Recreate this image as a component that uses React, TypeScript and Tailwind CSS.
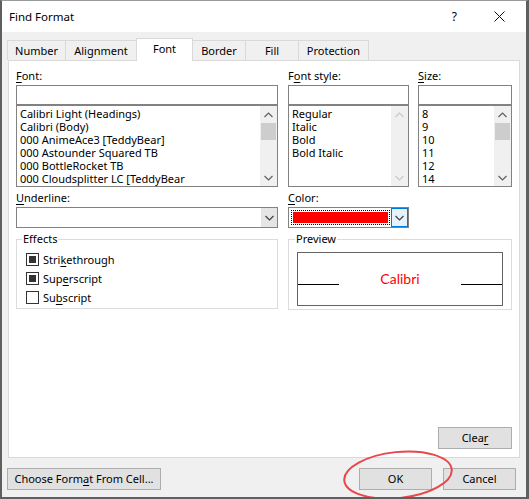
import React from "react";

const Chevron = ({ up = false, color = "#404040" }: { up?: boolean; color?: string }) => (
  <svg width="9" height="6" viewBox="0 0 9 6">
    <polyline
      points={up ? "0.5,5 4.5,1 8.5,5" : "0.5,1 4.5,5 8.5,1"}
      fill="none"
      stroke={color}
      strokeWidth="1.2"
    />
  </svg>
);

const ScrollBar = ({ disabled = false }: { disabled?: boolean }) => (
  <div className="w-[17px] h-full bg-[#f0f0f0] flex flex-col items-center shrink-0">
    <div className="h-[17px] w-full flex items-center justify-center">
      <Chevron up color={disabled ? "#c8c8c8" : "#606060"} />
    </div>
    {!disabled && <div className="h-[17px] w-[15px] bg-[#cdcdcd]" />}
    <div className="flex-1" />
    <div className="h-[17px] w-full flex items-center justify-center">
      <Chevron color={disabled ? "#c8c8c8" : "#606060"} />
    </div>
  </div>
);

const ListCol = ({
  label,
  items,
  width,
  disabled,
}: {
  label: React.ReactNode;
  items: string[];
  width: string;
  disabled?: boolean;
}) => (
  <div className={`flex flex-col ${width}`}>
    <div className="h-[16px] leading-[16px]">{label}</div>
    <div className="mt-[1px] h-[20px] border border-[#828282] bg-white" />
    <div className="h-[82px] border border-[#828282] bg-white flex overflow-hidden">
      <div className="flex-1 pt-[1px] pl-[3px] overflow-hidden whitespace-nowrap">
        {items.map((t) => (
          <div key={t} className="h-[13px] leading-[13px]">
            {t}
          </div>
        ))}
      </div>
      <ScrollBar disabled={disabled} />
    </div>
  </div>
);

const Check = ({ checked, children }: { checked: boolean; children: React.ReactNode }) => (
  <div className="h-[19px] flex items-center gap-[4px]">
    <div className="w-[13px] h-[13px] border border-[#333333] bg-white flex items-center justify-center">
      {checked && <div className="w-[7px] h-[7px] bg-[#333333]" />}
    </div>
    <span className="leading-[16px]">{children}</span>
  </div>
);

const Btn = ({ className, children }: { className: string; children: React.ReactNode }) => (
  <div
    className={`h-[22px] bg-[#e1e1e1] border border-[#adadad] flex items-center justify-center leading-[16px] whitespace-nowrap ${className}`}
  >
    {children}
  </div>
);

const U = ({ children }: { children: React.ReactNode }) => (
  <span className="underline underline-offset-[2px] decoration-1">{children}</span>
);

export default function App() {
  return (
    <div className="relative w-[529px] h-[499px] overflow-hidden bg-[#f0f0f0] border-t border-t-[#9a9a9a] border-l-2 border-r-[3px] border-b-2 border-[#5f5f5f] flex flex-col text-[11px] text-black font-['Noto_Sans',sans-serif]">
      {/* title bar */}
      <div className="h-[31px] bg-white flex items-center pl-[7px] shrink-0">
        <span className="text-[11.5px] leading-[16px]">Find Format</span>
        <div className="flex-1" />
        <span className="text-[12px] leading-[16px] mr-[37px]">?</span>
        <svg width="11" height="11" viewBox="0 0 11 11" className="mr-[21px]">
          <path d="M0.5 0.5 L10.5 10.5 M10.5 0.5 L0.5 10.5" stroke="#111" strokeWidth="1" />
        </svg>
      </div>

      {/* tabs */}
      <div className="h-[28px] flex items-end pl-[5px] shrink-0">
        <div className="w-[58px] h-[20px] border-t border-l border-[#d9d9d9] flex items-center justify-center leading-[16px]">
          Number
        </div>
        <div className="w-[71px] h-[20px] border-t border-l border-[#d9d9d9] flex items-center justify-center leading-[16px]">
          Alignment
        </div>
        <div className="relative z-10 -mb-px w-[57px] h-[23px] bg-white border-t border-x border-[#d9d9d9] flex items-start pt-[2px] justify-center leading-[16px]">
          Font
        </div>
        <div className="w-[52px] h-[20px] border-t border-[#d9d9d9] flex items-center justify-center leading-[16px]">
          Border
        </div>
        <div className="w-[53px] h-[20px] border-t border-l border-[#d9d9d9] flex items-center justify-center leading-[16px]">
          Fill
        </div>
        <div className="w-[71px] h-[20px] border-t border-x border-[#d9d9d9] flex items-center justify-center leading-[16px]">
          Protection
        </div>
      </div>

      {/* panel */}
      <div className="ml-[6px] w-[512px] h-[398px] border border-[#d9d9d9] bg-white flex flex-col pl-[7px] pr-[7px] pt-[7px] pb-[8px] shrink-0">
        <div className="flex">
          <ListCol
            width="w-[262px]"
            label={
              <>
                <U>F</U>ont:
              </>
            }
            items={[
              "Calibri Light (Headings)",
              "Calibri (Body)",
              "000 AnimeAce3 [TeddyBear]",
              "000 Astounder Squared TB",
              "000 BottleRocket TB",
              "000 Cloudsplitter LC [TeddyBear",
            ]}
          />
          <div className="w-[10px]" />
          <ListCol
            width="w-[121px]"
            disabled
            label={
              <>
                F<U>o</U>nt style:
              </>
            }
            items={["Regular", "Italic", "Bold", "Bold Italic"]}
          />
          <div className="w-[9px]" />
          <ListCol
            width="w-[94px]"
            label={
              <>
                <U>S</U>ize:
              </>
            }
            items={["8", "9", "10", "11", "12", "14"]}
          />
        </div>

        <div className="flex mt-[3px]">
          {/* left column */}
          <div className="w-[262px] flex flex-col">
            <div className="h-[16px] leading-[16px]">
              <U>U</U>nderline:
            </div>
            <div className="mt-[1px] h-[21px] border border-[#828282] bg-white flex justify-end">
              <div className="w-[16px] h-full bg-[#e5e5e5] flex items-center justify-center">
                <Chevron />
              </div>
            </div>
            <fieldset className="mt-[3px] border border-[#dcdcdc] h-[78px] m-0 p-0">
              <legend className="ml-[5px] px-[1px] leading-[16px]">Effects</legend>
              <div className="pt-[3px] pl-[9px]">
                <Check checked>
                  Stri<U>k</U>ethrough
                </Check>
                <Check checked>
                  Sup<U>e</U>rscript
                </Check>
                <Check checked={false}>
                  Su<U>b</U>script
                </Check>
              </div>
            </fieldset>
          </div>
          <div className="w-[10px]" />
          {/* right column */}
          <div className="w-[224px] flex flex-col">
            <div className="h-[16px] leading-[16px]">
              <U>C</U>olor:
            </div>
            <div className="mt-[1px] w-[121px] h-[21px] border border-[#828282] bg-white flex items-center">
              <div className="ml-[2px] w-[99px] h-[15px] border border-dotted border-black p-[1px]">
                <div className="w-full h-full bg-[#ff0000]" />
              </div>
              <div className="flex-1" />
              <div className="w-[17px] h-[19px] bg-[#e5f1fb] border border-[#0078d7] flex items-center justify-center">
                <Chevron />
              </div>
            </div>
            <fieldset className="mt-[3px] border border-[#dcdcdc] h-[79px] m-0 p-0">
              <legend className="ml-[6px] px-[1px] leading-[16px]">Preview</legend>
              <div className="mt-[5px] mx-[8px] h-[54px] border border-[#646464] flex items-start">
                <div className="w-[41px] h-[32px] border-b border-black" />
                <div className="flex-1 pt-[18px] text-center text-[#ff0000] text-[14px] leading-[16px] font-['Lato',sans-serif]">
                  Calibri
                </div>
                <div className="w-[41px] h-[32px] border-b border-black" />
              </div>
            </fieldset>
          </div>
        </div>

        <div className="flex-1" />
        <div className="flex justify-end">
          <Btn className="w-[74px]">
            Clea<U>r</U>
          </Btn>
        </div>
      </div>

      {/* bottom buttons */}
      <div className="mt-[10px] flex pl-[5px] pr-[10px]">
        <Btn className="w-[154px]">
          Choose Form<U>a</U>t From Cell...
        </Btn>
        <div className="flex-1" />
        <Btn className="w-[73px]">OK</Btn>
        <div className="w-[11px]" />
        <Btn className="w-[73px]">Cancel</Btn>
      </div>

      {/* red annotation ellipse */}
      <svg className="absolute left-0 top-0 pointer-events-none" width="529" height="499">
        <ellipse
          cx="396"
          cy="474"
          rx="54"
          ry="23"
          transform="rotate(-6 396 474)"
          fill="none"
          stroke="#e8474c"
          strokeWidth="2"
        />
      </svg>
    </div>
  );
}
